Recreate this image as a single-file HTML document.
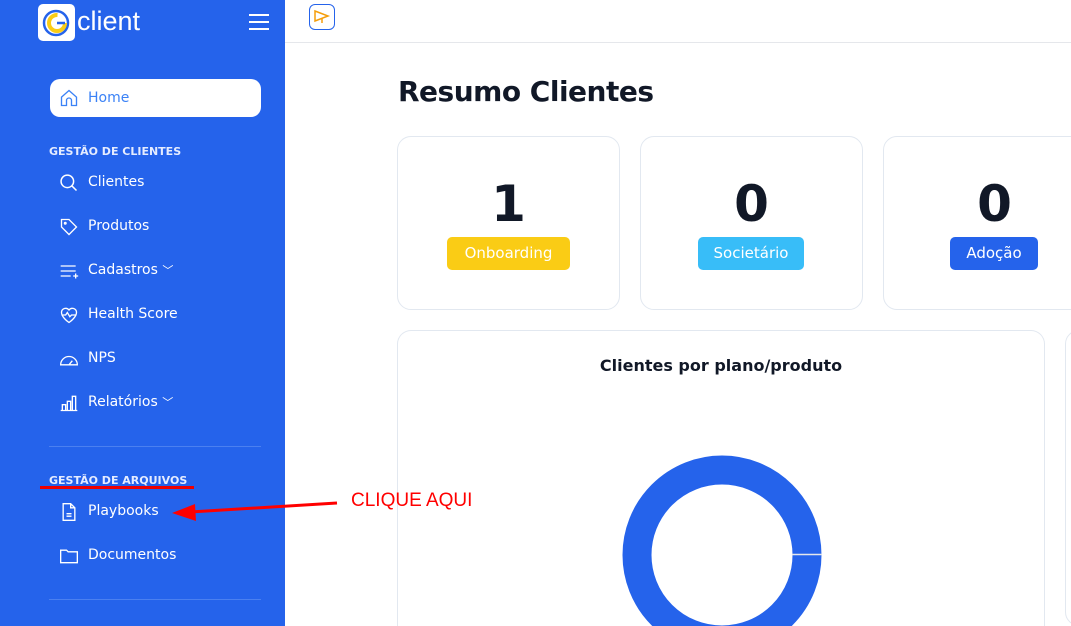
<!DOCTYPE html>
<html style="width:1071px;height:626px;overflow:hidden"><head><meta charset="utf-8"><style>
*{box-sizing:border-box;margin:0;padding:0}
body{width:1071px;height:626px;overflow:hidden;background:#fff;font-family:"DejaVu Sans","Liberation Sans",sans-serif;position:relative}
.sb{position:absolute;left:0;top:0;width:285px;height:626px;background:#2563eb;color:#fff}
.logo{position:absolute;left:38px;top:4px;width:37px;height:37px;background:#fff;border-radius:5px}
.brand{position:absolute;left:77px;top:6px;font-family:"Liberation Sans",sans-serif;font-size:27px;color:#fff}
.ham{position:absolute;left:249px;top:14px;width:20px}
.ham i{display:block;height:2px;background:#fff;margin-bottom:5px}
.home{position:absolute;left:50px;top:79px;width:211px;height:38px;background:#fff;border-radius:10px;color:#3b82f6;font-size:14px}
.home span{position:absolute;left:38px;top:11px}
.sec{position:absolute;left:49px;font-size:11px;font-weight:bold;color:#e5ecff}
.it{position:absolute;left:88px;font-size:14px;color:#fff}
.ic{position:absolute;left:59px}
.hr{position:absolute;left:49px;width:212px;height:1px;background:#4b80f0}
.top{position:absolute;left:285px;top:0;right:0;height:43px;border-bottom:1px solid #e5e7eb}
h1{position:absolute;left:398px;top:75px;font-size:28px;font-weight:bold;color:#111827;letter-spacing:-.5px}
.card{position:absolute;top:136px;width:223px;height:174px;border:1px solid #e2e8f0;border-radius:14px;background:#fff}
.card .n{position:absolute;left:0;right:0;top:38px;text-align:center;font-size:50px;font-weight:bold;color:#111827}
.badge{position:absolute;top:100px;height:33px;border-radius:5px;color:#fff;font-size:15px;line-height:33px;text-align:center}
.big{position:absolute;left:397px;top:330px;width:648px;height:296px;border:1px solid #e2e8f0;border-bottom:none;border-radius:14px 14px 0 0;overflow:hidden}
.big2{position:absolute;left:1065px;top:330px;width:50px;height:296px;border:1px solid #e2e8f0;border-radius:14px}
</style></head><body>
<div class="sb">
<div class="logo"><svg width="37" height="37"><circle cx="18" cy="19" r="12" fill="none" stroke="#2563eb" stroke-width="2.5"/><circle cx="19" cy="19" r="8" fill="none" stroke="#facc15" stroke-width="4" stroke-dasharray="38 12"/><path d="M19 19h8" stroke="#2563eb" stroke-width="2.5"/></svg></div>
<div class="brand">client</div>
<div class="ham"><i></i><i></i><i></i></div>
<div class="home"><svg style="position:absolute;left:9px;top:9px" width="20" height="20" viewBox="0 0 24 24" fill="none" stroke="#3b82f6" stroke-width="1.6"><path d="M3 11l9-8 9 8v10h-6v-6a3 3 0 0 0-6 0v6H3z"/></svg><span>Home</span></div>
<div class="sec" style="top:145px">GESTÃO DE CLIENTES</div>
<svg class="ic" style="top:173px" width="20" height="20" viewBox="0 0 24 24" fill="none" stroke="#fff" stroke-width="1.8"><circle cx="10" cy="10" r="7.5"/><path d="M15.5 15.5L21 21"/></svg><div class="it" style="top:174px">Clientes</div>
<svg class="ic" style="top:217px" width="20" height="20" viewBox="0 0 24 24" fill="none" stroke="#fff" stroke-width="1.6"><path d="M3 3h9l9 9-9 9-9-9z"/><circle cx="7.5" cy="7.5" r="1"/></svg><div class="it" style="top:218px">Produtos</div>
<svg class="ic" style="top:261px" width="20" height="20" viewBox="0 0 24 24" fill="none" stroke="#fff" stroke-width="1.6"><path d="M2 6h18M2 12h18M2 18h12M17 18h6M20 15v6"/></svg><div class="it" style="top:262px">Cadastros <span style="font-size:11px">﹀</span></div>
<svg class="ic" style="top:305px" width="20" height="20" viewBox="0 0 24 24" fill="none" stroke="#fff" stroke-width="1.6"><path d="M12 21s-9-6-9-12a5 5 0 0 1 9-3 5 5 0 0 1 9 3c0 6-9 12-9 12z"/><path d="M3 12h5l2-3 3 5 2-2h6"/></svg><div class="it" style="top:306px">Health Score</div>
<svg class="ic" style="top:349px" width="20" height="20" viewBox="0 0 24 24" fill="none" stroke="#fff" stroke-width="1.6"><path d="M2 19a10 10 0 0 1 20 0zM12 19l4-5"/></svg><div class="it" style="top:350px">NPS</div>
<svg class="ic" style="top:393px" width="20" height="20" viewBox="0 0 24 24" fill="none" stroke="#fff" stroke-width="1.6"><path d="M2 21h20M4 21v-7h4v7M10 21V10h4v11M16 21V4h4v17"/></svg><div class="it" style="top:394px">Relatórios <span style="font-size:11px">﹀</span></div>
<div class="hr" style="top:446px"></div>
<div class="sec" style="top:474px">GESTÃO DE ARQUIVOS</div>
<svg class="ic" style="top:502px" width="20" height="20" viewBox="0 0 24 24" fill="none" stroke="#fff" stroke-width="1.6"><path d="M5 2h9l5 5v15H5zM14 2v5h5M9 14h6M9 17h6"/></svg><div class="it" style="top:503px">Playbooks</div>
<svg class="ic" style="top:546px" width="20" height="20" viewBox="0 0 24 24" fill="none" stroke="#fff" stroke-width="1.6"><path d="M2 5h7l2 2h11v13H2z"/></svg><div class="it" style="top:547px">Documentos</div>
<div class="hr" style="top:599px"></div>
</div>
<div class="top"><div style="position:absolute;left:24px;top:4px;width:26px;height:26px;border:1.5px solid #2563eb;border-radius:6px"><svg width="24" height="24" viewBox="0 0 24 24" fill="none" stroke="#f59e0b" stroke-width="1.5"><path d="M5 6v10l13-5z"/><path d="M12 13v5"/></svg></div></div>
<h1>Resumo Clientes</h1>
<div class="card" style="left:397px"><div class="n">1</div><div class="badge" style="left:49px;width:123px;background:#facc15">Onboarding</div></div>
<div class="card" style="left:640px"><div class="n">0</div><div class="badge" style="left:57px;width:106px;background:#38bdf8">Societário</div></div>
<div class="card" style="left:883px"><div class="n">0</div><div class="badge" style="left:66px;width:88px;background:#2563eb">Adoção</div></div>
<div class="big"><div style="position:absolute;left:0;right:0;top:25px;text-align:center;font-size:16px;font-weight:bold;color:#111827">Clientes por plano/produto</div>
<svg style="position:absolute;left:222px;top:122px" width="204" height="204"><circle cx="102" cy="102" r="85" fill="none" stroke="#2563eb" stroke-width="29"/><path d="M172 101.5h30" stroke="#e5e7eb" stroke-width="1.5"/></svg></div>
<div class="big2"></div>
<div style="position:absolute;left:40px;top:486px;width:154px;height:3px;background:#e00"></div>
<svg style="position:absolute;left:0;top:0" width="1071" height="626"><path d="M337 503L190 512" stroke="#f00" stroke-width="3"/><path d="M172 513l23-9 1 17z" fill="#f00"/></svg>
<div style="position:absolute;left:351px;top:490px;font-family:'Liberation Sans',sans-serif;font-size:19px;color:#f00">CLIQUE AQUI</div>
</body></html>
